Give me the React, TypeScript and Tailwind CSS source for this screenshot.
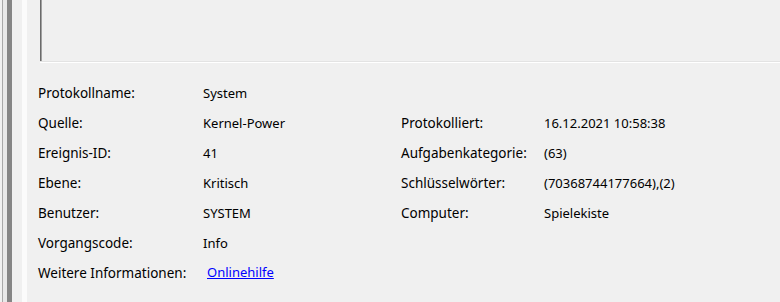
import React from 'react';

type Row = { label: string; value: string; rLabel?: string; rValue?: string };

const rows: Row[] = [
  { label: 'Protokollname:', value: 'System' },
  { label: 'Quelle:', value: 'Kernel-Power', rLabel: 'Protokolliert:', rValue: '16.12.2021 10:58:38' },
  { label: 'Ereignis-ID:', value: '41', rLabel: 'Aufgabenkategorie:', rValue: '(63)' },
  { label: 'Ebene:', value: 'Kritisch', rLabel: 'Schlüsselwörter:', rValue: '(70368744177664),(2)' },
  { label: 'Benutzer:', value: 'SYSTEM', rLabel: 'Computer:', rValue: 'Spielekiste' },
  { label: 'Vorgangscode:', value: 'Info' },
];

const App: React.FC = () => {
  return (
    <div
      className="flex h-[302px] w-[780px] overflow-hidden bg-[#f0f0f0] text-[13px] text-black"
      style={{ fontFamily: '"Noto Sans", "Segoe UI", sans-serif' }}
    >
      {/* window edge / splitter */}
      <div className="flex h-full shrink-0">
        <div className="w-[2px] bg-[#f0f0f0]" />
        <div className="w-[1px] bg-[#a8a8a8]" />
        <div className="w-[4px] bg-[#e8e8e8]" />
        <div className="w-[5px] bg-[#858585]" />
        <div className="w-[10px] bg-[#f0f0f0]" />
        <div className="w-[5px] bg-[#fbfbfb]" />
      </div>

      <div className="flex min-w-0 flex-1 flex-col">
        {/* bottom of the description box */}
        <div className="h-[61px] shrink-0 pl-[13px]">
          <div className="flex h-full">
            <div className="w-[1px] bg-[#6a6a6a]" />
            <div className="w-[1px] bg-[#a0a0a0]" />
          </div>
        </div>
        <div className="h-[1px] shrink-0 bg-[#e3e3e3] ml-[13px]" />
        <div className="h-[1px] shrink-0 bg-white ml-[13px]" />

        <div className="grid grid-cols-[165px_198px_143px_1fr] pl-[11px] pt-[15px]">
          {rows.map((r) => (
            <React.Fragment key={r.label}>
              <div className="flex h-[30px] items-center text-[13.5px]">{r.label}</div>
              <div className="flex h-[30px] items-center pt-[2px]">{r.value}</div>
              <div className="flex h-[30px] items-center text-[13.5px]">{r.rLabel ?? ''}</div>
              <div className="flex h-[30px] items-center pt-[2px]">{r.rValue ?? ''}</div>
            </React.Fragment>
          ))}
          <div className="flex h-[30px] items-center text-[13.5px]">Weitere Informationen:</div>
          <div className="flex h-[30px] items-center pl-[4px]">
            <a href="#" className="text-[#0000ff] underline">Onlinehilfe</a>
          </div>
        </div>
      </div>
    </div>
  );
};

export default App;
